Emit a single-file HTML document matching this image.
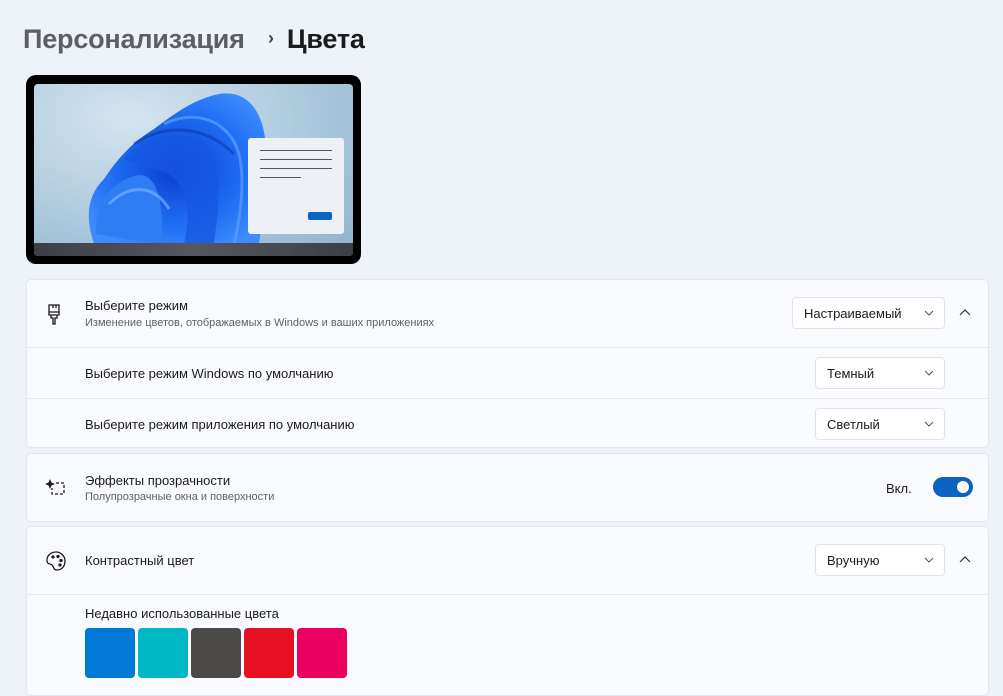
<!DOCTYPE html>
<html><head><meta charset="utf-8"><style>
*{box-sizing:border-box;margin:0;padding:0}
body{width:1003px;height:683px;overflow:hidden;background:#eef2f9;font-family:"Segoe UI","Liberation Sans","Noto Sans CJK SC",sans-serif;color:#1b1b1b;position:relative}
.abs{position:absolute}
.h1{left:23px;top:24px;font-size:27px;font-weight:600;color:#5d5f62;letter-spacing:-0.2px;white-space:nowrap}
.h1 b{color:#1b1b1b;font-weight:700}
.card{position:absolute;left:26px;width:963px;background:#f9fafd;border:1px solid #e3e6ec;border-radius:5px}
.sep{position:absolute;left:0;right:0;height:1px;background:#e6e8ee}
.t{position:absolute;left:58px;font-size:13px;color:#1b1b1b}
.s{position:absolute;left:58px;font-size:11px;color:#5f6166}
.dd{position:absolute;background:#fff;border:1px solid #e1e3e8;border-radius:4px;height:32px;font-size:13px;padding:8px 11px}
.dd svg{position:absolute;right:10px;top:12px}
.chev{position:absolute}
</style></head><body>
<div class="abs h1">Персонализация <span style="font-size:18px;color:#444;margin:0 13px 0 16px;position:relative;top:-4px">›</span><b>Цвета</b></div>

<div class="abs" style="left:26px;top:75px;width:335px;height:189px;background:#000;border-radius:10px"></div>
<div class="abs" style="left:34px;top:84px;width:319px;height:172px;border-radius:4px;overflow:hidden;background:radial-gradient(ellipse at 30% 20%,#d4e5f0,#a9c7dc 60%,#8fb2cc)">
 <svg width="319" height="172" style="position:absolute;left:0;top:0">
  <defs><radialGradient id="g" cx="50%" cy="50%" r="60%"><stop offset="0" stop-color="#0a3ccf"/><stop offset="0.6" stop-color="#1e6cf2"/><stop offset="1" stop-color="#3d8cff"/></radialGradient></defs>
  <path d="M60 160 C50 130 55 110 70 95 C80 80 95 60 120 45 C140 30 160 15 185 10 C215 5 232 30 232 70 C232 110 228 140 225 160 Z" fill="url(#g)"/>
  <path d="M62 150 C60 120 75 100 100 92 C120 86 130 110 128 160 Z" fill="#2f7df5"/>
  <path d="M90 75 C110 50 150 45 170 60 C190 80 185 120 180 160 L150 160 C160 120 150 90 120 85 Z" fill="#1557e0" opacity=".8"/>
  <path d="M130 40 C160 25 195 35 205 70 C212 100 205 140 200 160" fill="none" stroke="#5aa0ff" stroke-width="3" opacity=".7"/>
  <path d="M75 120 C95 100 120 100 135 125" fill="none" stroke="#6fb0ff" stroke-width="3" opacity=".7"/>
  <path d="M100 60 C130 40 170 40 200 70" fill="none" stroke="#0b2fa8" stroke-width="3" opacity=".5"/>
 </svg>
 <div class="abs" style="left:214px;top:54px;width:96px;height:96px;background:#edf1f6;border-radius:3px">
  <div class="abs" style="left:12px;top:12px;width:72px;height:1px;background:#555"></div>
  <div class="abs" style="left:12px;top:21px;width:72px;height:1px;background:#555"></div>
  <div class="abs" style="left:12px;top:30px;width:72px;height:1px;background:#555"></div>
  <div class="abs" style="left:12px;top:39px;width:41px;height:1px;background:#555"></div>
  <div class="abs" style="left:60px;top:74px;width:24px;height:8px;background:#0a67c3;border-radius:2px"></div>
 </div>
 <div class="abs" style="left:0;top:159px;width:319px;height:13px;background:linear-gradient(90deg,#3b3f45,#55595f,#3b3f45)"></div>
</div>

<div class="card" style="top:279px;height:169px">
 <svg class="abs" style="left:20px;top:24px" width="14" height="22" viewBox="0 0 14 22" fill="none" stroke="#1b1b1b" stroke-width="1.3"><path d="M2 1h10v10H2z M2 8h10 M6 1v3 M9 1v3 M4 11v3h2v6h2v-6h2v-3"/></svg>
 <div class="t" style="top:18px">Выберите режим</div>
 <div class="s" style="top:37px">Изменение цветов, отображаемых в Windows и ваших приложениях</div>
 <div class="dd" style="left:765px;top:17px;width:153px">Настраиваемый<svg width="10" height="6"><path d="M1 1l4 4 4-4" stroke="#555" fill="none"/></svg></div>
 <svg class="chev" style="left:932px;top:28px" width="12" height="8"><path d="M1 7l5-5 5 5" stroke="#333" fill="none" stroke-width="1.2"/></svg>
 <div class="sep" style="top:67px"></div>
 <div class="t" style="top:86px">Выберите режим Windows по умолчанию</div>
 <div class="dd" style="left:788px;top:77px;width:130px">Темный<svg width="10" height="6"><path d="M1 1l4 4 4-4" stroke="#555" fill="none"/></svg></div>
 <div class="sep" style="top:118px"></div>
 <div class="t" style="top:137px">Выберите режим приложения по умолчанию</div>
 <div class="dd" style="left:788px;top:128px;width:130px">Светлый<svg width="10" height="6"><path d="M1 1l4 4 4-4" stroke="#555" fill="none"/></svg></div>
</div>

<div class="card" style="top:453px;height:69px">
 <svg class="abs" style="left:17px;top:24px" width="24" height="20" viewBox="0 0 24 20" fill="none"><path d="M6 1l1.5 3.5L11 6 7.5 7.5 6 11 4.5 7.5 1 6l3.5-1.5z" fill="#1b1b1b"/><path d="M12 5h8v11h-12v-6" stroke="#1b1b1b" stroke-width="1.3" stroke-dasharray="3 2"/></svg>
 <div class="t" style="top:19px">Эффекты прозрачности</div>
 <div class="s" style="top:37px">Полупрозрачные окна и поверхности</div>
 <div class="abs" style="left:859px;top:27px;font-size:13px">Вкл.</div>
 <div class="abs" style="left:906px;top:23px;width:40px;height:20px;border-radius:10px;background:#0a63be"><div class="abs" style="left:24px;top:4px;width:12px;height:12px;border-radius:6px;background:#fff"></div></div>
</div>

<div class="card" style="top:526px;height:170px">
 <svg class="abs" style="left:18px;top:23px" width="22" height="22" viewBox="0 0 22 22" fill="none" stroke="#1b1b1b" stroke-width="1.3"><path d="M11 2C5 2 1.5 6.5 2 11c.5 4 4 2 5.5 4.5S9 20 12 20c5 0 8-4 8-9S16 2 11 2z"/><circle cx="8" cy="7" r="1" fill="#1b1b1b"/><circle cx="13" cy="6.5" r="1" fill="#1b1b1b"/><circle cx="16" cy="10.5" r="1" fill="#1b1b1b"/><circle cx="15" cy="15" r="1" fill="#1b1b1b"/></svg>
 <div class="t" style="top:26px">Контрастный цвет</div>
 <div class="dd" style="left:788px;top:17px;width:130px">Вручную<svg width="10" height="6"><path d="M1 1l4 4 4-4" stroke="#555" fill="none"/></svg></div>
 <svg class="chev" style="left:932px;top:28px" width="12" height="8"><path d="M1 7l5-5 5 5" stroke="#333" fill="none" stroke-width="1.2"/></svg>
 <div class="sep" style="top:67px"></div>
 <div class="t" style="top:79px">Недавно использованные цвета</div>
 <div class="abs" style="left:58px;top:101px;width:50px;height:50px;background:#0078d4;border-radius:4px"></div>
 <div class="abs" style="left:111px;top:101px;width:50px;height:50px;background:#00b7c3;border-radius:4px"></div>
 <div class="abs" style="left:164px;top:101px;width:50px;height:50px;background:#4c4a48;border-radius:4px"></div>
 <div class="abs" style="left:217px;top:101px;width:50px;height:50px;background:#e81123;border-radius:4px"></div>
 <div class="abs" style="left:270px;top:101px;width:50px;height:50px;background:#ea005e;border-radius:4px"></div>
</div>
</body></html>
